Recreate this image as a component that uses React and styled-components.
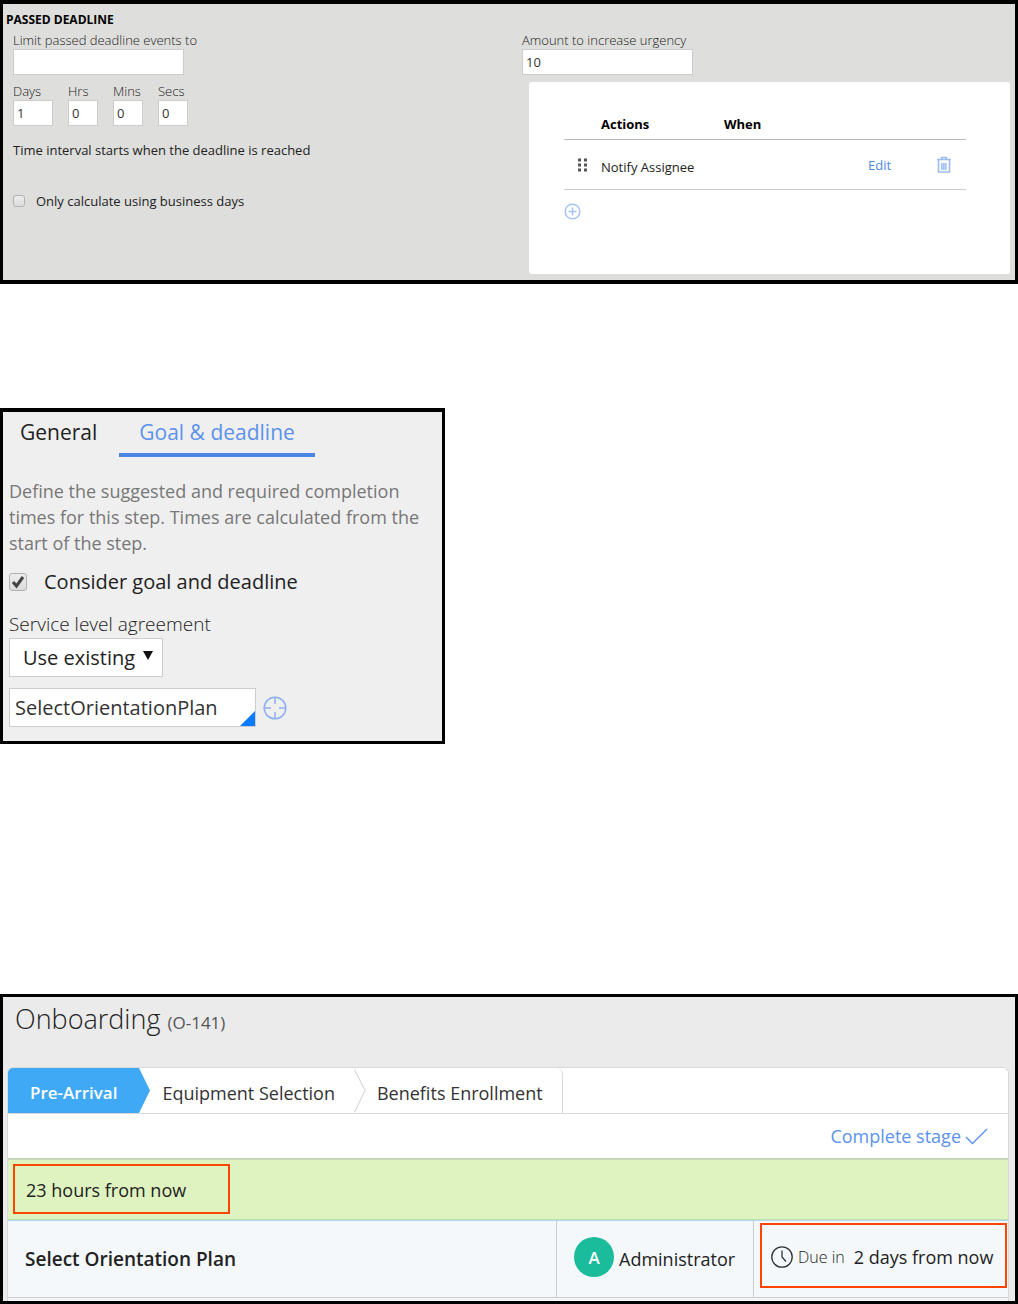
import React, {useState} from "react"
import styled, {createGlobalStyle} from "styled-components"

const GlobalStyle = createGlobalStyle`
  *, *::before, *::after {
    box-sizing: border-box;
  }

  body {
    margin: 0;
    background-color: #fff;
    color: #222;
    font-family: "Open Sans", "Liberation Sans", sans-serif;
    font-size: 13px;
  }

  button, input, select {
    color: inherit;
    font-family: inherit;
    font-size: inherit;
  }
`
const Page = styled.main`
  display: flex;
  flex-direction: column;
`

// Shared parts
const Panel = styled.section`
  background-color: ${({color}) => color};
  border: 3px solid #000;
`
const Label = styled.label`
  display: block;
  color: #222;
  font-weight: 300;
`
const Check = styled.input`
  appearance: none;
  width: ${({size}) => size}px;
  height: ${({size}) => size}px;
  margin: 0;
  background: linear-gradient(#ededed, #dcdcdc);
  border: 1px solid #b2b2b2;
  border-radius: 3px;
`
const CheckLine = styled.div`
  display: flex;
  align-items: center;
`
const IconButton = styled.button`
  display: flex;
  padding: 0;
  background: none;
  border: none;
  cursor: pointer;
`

// Passed deadline
const DeadlinePanel = styled(Panel)`
  border-top-width: 4px;
  border-bottom-width: 4px;
  padding: 8px 5px 6px 3px;
`
const DeadlineTitle = styled.h2`
  margin: 0;
  color: #000;
  font-size: 12px;
  line-height: 16px;
`
const Columns = styled.div`
  display: grid;
  grid-template-columns: 509px 1fr;
  padding-left: 7px;
  line-height: 18px;

  @media (max-width: 900px) {
    grid-template-columns: 1fr;
  }
`
const Field = styled.div`
  padding-top: 3px;
`
const TextBox = styled.input`
  display: block;
  width: ${({width}) => width}px;
  height: 26px;
  padding: 0 3px;
  background-color: #fff;
  border: 1px solid #ccc;
  color: #333;
`
const Interval = styled.div`
  display: flex;
  gap: 15px;
  padding-top: 4px;
`
const IntervalField = styled(Field)`
  min-width: 30px;
`
const Note = styled.p`
  margin: 15px 0 33px;
`
const SmallCheckLine = styled(CheckLine)`
  gap: 11px;
`
const Card = styled.div`
  height: 192px;
  margin: 7px 0 0 7px;
  padding: 28px 44px 0 35px;
  background-color: #fff;
  border-radius: 3px;
`
const ActionTable = styled.table`
  width: 100%;
  border-collapse: separate;
  border-spacing: 0;
  table-layout: fixed;
`
const HeadCell = styled.th`
  width: ${({width}) => width ? `${width}px` : "auto"};
  height: 30px;
  padding: 0 0 2px;
  border-bottom: 1px solid #bbb;
  color: #000;
  text-align: left;
`
const ActionCell = styled.td`
  height: 50px;
  padding: 0;
  border-bottom: 1px solid #ccc;
`
const ActionName = styled.span`
  display: block;
  padding-top: 4px;
`
const EditLink = styled.a`
  color: #4d8ae8;
  text-decoration: none;
`
const AddButton = styled(IconButton)`
  margin-top: 13px;
`
const Handle = styled.svg`
  display: block;
  margin-left: 13px;
`

// Goal and deadline
const GoalPanel = styled(Panel)`
  max-width: 445px;
  margin-top: 124px;
  padding: 0 6px 14px;
  border-top-width: 4px;
  font-size: 19px;
`
const TabList = styled.div`
  display: flex;
`
const Tab = styled.button`
  height: 45px;
  padding: 0 20px 2px;
  background: none;
  border: none;
  border-bottom: 4px solid ${({$active}) => $active ? "#4a86e8" : "transparent"};
  color: ${({$active}) => $active ? "#5b92ec" : "#222"};
  font-size: 21px;
  line-height: 28px;

  &:first-child {
    padding: 0 22px 2px 11px;
  }
`
const Hint = styled.p`
  margin: 21px 0 0;
  color: #777;
  font-size: 18px;
  line-height: 26px;
`
const GoalCheckLine = styled(CheckLine)`
  gap: 17px;
  padding-top: 12px;
  font-size: 20px;
  line-height: 28px;
`
const CheckBox = styled.span`
  display: grid;

  > * {
    grid-area: 1 / 1;
  }

  svg {
    pointer-events: none;
  }
`
const GoalLabel = styled(Label)`
  padding-top: 15px;
  line-height: 27px;
`
const SelectBox = styled.div`
  display: inline-grid;
  align-items: center;
  justify-items: end;
  margin-bottom: 11px;

  > * {
    grid-area: 1 / 1;
  }

  svg {
    margin: 0 10px 4px 0;
    pointer-events: none;
  }
`
const Select = styled.select`
  appearance: none;
  width: 154px;
  height: 39px;
  padding: 0 13px;
  background-color: #fff;
  border: 1px solid #ccc;
  border-radius: 0;
  font-size: 20px;
`
const LookupLine = styled.div`
  display: flex;
  align-items: center;
  gap: 7px;
`
const LookupBox = styled.div`
  display: grid;
  align-items: end;
  justify-items: end;

  > * {
    grid-area: 1 / 1;
  }

  svg {
    margin: 1px;
    pointer-events: none;
  }
`
const LookupInput = styled(TextBox)`
  height: 39px;
  padding: 0 5px;
  font-size: 20px;
`

// Onboarding case
const CasePanel = styled(Panel)`
  margin-top: 250px;
  padding: 4px 6px 0 4px;
  font-size: 18px;
`
const CaseTitle = styled.h1`
  margin: 0 0 26px 8px;
  color: #222;
  font-size: 27px;
  font-weight: 300;
  line-height: 36px;

  small {
    color: #555;
    font-size: 17px;
    font-weight: 400;
  }
`
const CaseBody = styled.div`
  background-color: #fff;
  border: 1px solid #d9d9d9;
  border-bottom: none;
  border-radius: 6px 6px 0 0;
  overflow: hidden;
`
const Stages = styled.ol`
  display: flex;
  height: 46px;
  margin: 0;
  padding: 0;
  border-bottom: 1px solid #d9d9d9;
  list-style: none;
`
const Stage = styled.li`
  display: flex;
  align-items: center;
  padding: 4px 19px 0 11px;
  color: #333;

  &:last-child {
    border-right: 1px solid #d9d9d9;
    border-radius: 0 6px 0 0;
  }
`
const CurrentStage = styled(Stage)`
  padding: 4px 22px 0;
  background-color: #3fa9f5;
  color: #fff;
  font-size: 17px;
  font-weight: 600;
`
const StageBar = styled.div`
  display: flex;
  justify-content: flex-end;
  height: 44px;
  padding-right: 20px;
`
const StageButton = styled(IconButton)`
  align-items: center;
  gap: 4px;
  color: #5b92ec;
`
const GoalBar = styled.div`
  height: 62px;
  padding: 4px 5px;
  background-color: #dff3c0;
  border-top: 2px solid #c4d5b8;
  border-bottom: 1px solid #c4dfb4;
`
const Callout = styled.div`
  display: flex;
  align-items: center;
  width: ${({width}) => width ? `${width}px` : "auto"};
  height: ${({height}) => height}px;
  padding: 2px 11px 0;
  border: 2px solid #ff4500;
`
const AssignmentTable = styled.table`
  width: 100%;
  border-collapse: separate;
  border-spacing: 0;
  border-top: 1px solid #b0d8ea;
  background-color: #f4f8fa;
`
const AssignmentCell = styled.td`
  width: ${({width}) => width ? `${width}px` : "auto"};
  height: 77px;
  padding: ${({$pad}) => $pad || "0 17px"};
  border-bottom: 1px solid #ccc;
  border-left: ${({$divided}) => $divided ? "1px solid #ccc" : "none"};
  white-space: nowrap;

  strong {
    font-size: 19px;
    font-weight: 600;
  }
`
const Person = styled.div`
  display: flex;
  align-items: center;
  gap: 5px;
`
const Avatar = styled.span`
  display: flex;
  align-items: center;
  justify-content: center;
  width: 40px;
  height: 40px;
  margin-bottom: 4px;
  background-color: #1abc9c;
  border-radius: 50%;
  color: #fff;
  font-size: 17px;
  font-weight: 600;
`
const DueCallout = styled(Callout)`
  padding: 4px 9px 0;
`
const DueLabel = styled.span`
  margin: 0 9px 0 5px;
  font-size: 16px;
  font-weight: 300;
`
const Footer = styled.div`
  height: 3px;
  background-color: #f4f8fa;
`

const intervals = [
  {id: "days", label: "Days", value: 1, width: 40},
  {id: "hrs", label: "Hrs", value: 0, width: 30},
  {id: "mins", label: "Mins", value: 0, width: 30},
  {id: "secs", label: "Secs", value: 0, width: 30},
]
const tabs = ["General", "Goal & deadline"]

const DragHandle = () => (
  <Handle width="11" height="14" fill="#555" aria-hidden="true">
    {[0, 5, 10].map((y) => [1, 7].map((x) => (
      <rect key={`${x}-${y}`} x={x} y={y + 0.5} width="3" height="3"/>
    )))}
  </Handle>
)

const TrashIcon = () => (
  <svg width="14" height="17" fill="none" stroke="#9bbcf3" aria-hidden="true">
    <path d="M4.5 3V1.5h5V3M0 3.5h14" strokeWidth="1.4"/>
    <path d="M1.5 4v12h11V4" strokeWidth="1.6"/>
    <path d="M4 7h6v7H4z" fill="#bdd3f7" stroke="none"/>
    <path d="M4.5 7v7M6.5 7v7M8.5 7v7" strokeWidth="0.8"/>
  </svg>
)

const PlusIcon = () => (
  <svg width="17" height="17" fill="none" stroke="#a5c4f5" aria-hidden="true">
    <circle cx="8.5" cy="8.5" r="7.3" strokeWidth="1.5"/>
    <path d="M8.5 4.5v8M4.5 8.5h8" strokeWidth="1.5"/>
  </svg>
)

const TargetIcon = () => (
  <svg width="24" height="24" fill="none" stroke="#8eb0ef" strokeWidth="1.5" aria-hidden="true">
    <circle cx="12" cy="12" r="10.8"/>
    <path d="M12 1v7M12 16v7M1 12h7M16 12h7"/>
  </svg>
)

const ClockIcon = () => (
  <svg width="22" height="22" fill="none" stroke="#333" strokeWidth="1.3" aria-hidden="true">
    <circle cx="11" cy="11" r="10.2"/>
    <path d="M11 4.5V11l4 4.5"/>
  </svg>
)

const StageArrow = ({filled}) => (
  <svg width="12" height="45" fill={filled ? "#3fa9f5" : "none"} aria-hidden="true">
    {filled
      ? <path d="M0 0l11 22.5L0 45z"/>
      : <path d="M0.5 1.5l10.5 21L0.5 44.5" stroke="#d9d9d9" strokeWidth="1.2"/>}
  </svg>
)

const PassedDeadline = () => {
  const [businessDays, setBusinessDays] = useState(false)
  return (
    <DeadlinePanel color="#dededc">
      <DeadlineTitle>PASSED DEADLINE</DeadlineTitle>
      <Columns>
        <div>
          <Field>
            <Label htmlFor="limit">Limit passed deadline events to</Label>
            <TextBox id="limit" width={171}/>
          </Field>
          <Interval>
            {intervals.map(({id, label, value, width}) => (
              <IntervalField key={id}>
                <Label htmlFor={id}>{label}</Label>
                <TextBox id={id} width={width} defaultValue={value}/>
              </IntervalField>
            ))}
          </Interval>
          <Note>Time interval starts when the deadline is reached</Note>
          <SmallCheckLine>
            <Check
              id="business-days"
              type="checkbox"
              size={12}
              checked={businessDays}
              onChange={(e) => setBusinessDays(e.target.checked)}
            />
            <label htmlFor="business-days">Only calculate using business days</label>
          </SmallCheckLine>
        </div>
        <div>
          <Field>
            <Label htmlFor="urgency">Amount to increase urgency</Label>
            <TextBox id="urgency" width={171} defaultValue="10"/>
          </Field>
          <Card>
            <ActionTable>
              <thead>
                <tr>
                  <HeadCell width={37}/>
                  <HeadCell width={123}>Actions</HeadCell>
                  <HeadCell>When</HeadCell>
                  <HeadCell width={69}/>
                  <HeadCell width={29}/>
                </tr>
              </thead>
              <tbody>
                <tr>
                  <ActionCell><DragHandle/></ActionCell>
                  <ActionCell><ActionName>Notify Assignee</ActionName></ActionCell>
                  <ActionCell/>
                  <ActionCell><EditLink href="#edit">Edit</EditLink></ActionCell>
                  <ActionCell>
                    <IconButton aria-label="Delete"><TrashIcon/></IconButton>
                  </ActionCell>
                </tr>
              </tbody>
            </ActionTable>
            <AddButton aria-label="Add"><PlusIcon/></AddButton>
          </Card>
        </div>
      </Columns>
    </DeadlinePanel>
  )
}

const GoalAndDeadline = () => {
  const [activeTab, setActiveTab] = useState(tabs[1])
  const [consider, setConsider] = useState(true)
  return (
    <GoalPanel color="#efefef">
      <TabList role="tablist">
        {tabs.map((tab) => (
          <Tab
            key={tab}
            role="tab"
            aria-selected={tab === activeTab}
            $active={tab === activeTab}
            onClick={() => setActiveTab(tab)}
          >
            {tab}
          </Tab>
        ))}
      </TabList>
      <Hint>
        Define the suggested and required completion times for this step. Times are
        calculated from the start of the step.
      </Hint>
      <GoalCheckLine>
        <CheckBox>
          <Check
            id="consider"
            type="checkbox"
            size={18}
            checked={consider}
            onChange={(e) => setConsider(e.target.checked)}
          />
          {consider && (
            <svg width="18" height="18" fill="none" stroke="#444" strokeWidth="3" aria-hidden="true">
              <path d="M4 9l3.5 4L14 4"/>
            </svg>
          )}
        </CheckBox>
        <label htmlFor="consider">Consider goal and deadline</label>
      </GoalCheckLine>
      <GoalLabel htmlFor="sla">Service level agreement</GoalLabel>
      <SelectBox>
        <Select id="sla">
          <option>Use existing</option>
        </Select>
        <svg width="10" height="10" fill="#111" aria-hidden="true">
          <path d="M0 0h10L5 9z"/>
        </svg>
      </SelectBox>
      <LookupLine>
        <LookupBox>
          <LookupInput
            aria-label="Service level agreement name"
            width={247}
            defaultValue="SelectOrientationPlan"
          />
          <svg width="15" height="15" fill="#0a7bff" aria-hidden="true">
            <path d="M15 0v15H0z"/>
          </svg>
        </LookupBox>
        <IconButton aria-label="Open"><TargetIcon/></IconButton>
      </LookupLine>
    </GoalPanel>
  )
}

const Onboarding = () => (
  <CasePanel color="#ebebeb">
    <CaseTitle>Onboarding <small>(O-141)</small></CaseTitle>
    <CaseBody>
      <Stages>
        <CurrentStage aria-current="step">Pre-Arrival</CurrentStage>
        <StageArrow filled/>
        <Stage>Equipment Selection</Stage>
        <StageArrow/>
        <Stage>Benefits Enrollment</Stage>
      </Stages>
      <StageBar>
        <StageButton>
          Complete stage
          <svg width="23" height="17" fill="none" stroke="#5b92ec" strokeWidth="1.4" aria-hidden="true">
            <path d="M1 9l6.5 6.5L22 1"/>
          </svg>
        </StageButton>
      </StageBar>
      <GoalBar>
        <Callout width={217} height={50}>23 hours from now</Callout>
      </GoalBar>
      <AssignmentTable>
        <tbody>
          <tr>
            <AssignmentCell><strong>Select Orientation Plan</strong></AssignmentCell>
            <AssignmentCell width={197} $divided>
              <Person><Avatar>A</Avatar>Administrator</Person>
            </AssignmentCell>
            <AssignmentCell width={255} $divided $pad="0 1px 8px 6px">
              <DueCallout height={65}>
                <ClockIcon/>
                <DueLabel>Due in</DueLabel>
                2 days from now
              </DueCallout>
            </AssignmentCell>
          </tr>
        </tbody>
      </AssignmentTable>
      <Footer/>
    </CaseBody>
  </CasePanel>
)

const App = () => (
  <>
    <GlobalStyle/>
    <Page>
      <PassedDeadline/>
      <GoalAndDeadline/>
      <Onboarding/>
    </Page>
  </>
)

export default App
